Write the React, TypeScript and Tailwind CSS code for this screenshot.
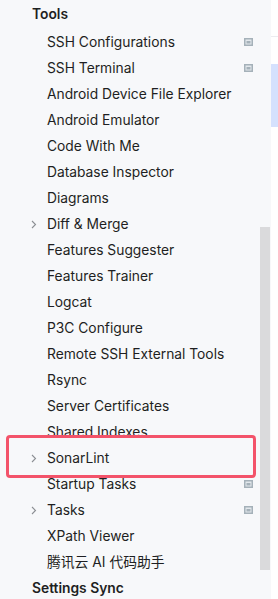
import React from "react";

// Settings tree — "Tools" group of the IDE settings dialog

type Item = { label: string; chevron?: boolean; icon?: boolean };

const items: Item[] = [
  { label: "SSH Configurations", icon: true },
  { label: "SSH Terminal", icon: true },
  { label: "Android Device File Explorer" },
  { label: "Android Emulator" },
  { label: "Code With Me" },
  { label: "Database Inspector" },
  { label: "Diagrams" },
  { label: "Diff & Merge", chevron: true },
  { label: "Features Suggester" },
  { label: "Features Trainer" },
  { label: "Logcat" },
  { label: "P3C Configure" },
  { label: "Remote SSH External Tools" },
  { label: "Rsync" },
  { label: "Server Certificates" },
  { label: "Shared Indexes" },
  { label: "SonarLint", chevron: true },
  { label: "Startup Tasks", icon: true },
  { label: "Tasks", chevron: true, icon: true },
  { label: "XPath Viewer" },
  { label: "腾讯云 AI 代码助手" },
];

function Chevron() {
  return (
    <svg width="6" height="9" viewBox="0 0 6 9" className="ml-[2px]">
      <path d="M1 1 L4.5 4.5 L1 8" fill="none" stroke="#8c8f94" strokeWidth="1.1" />
    </svg>
  );
}

// small "project-level" badge on the right of some rows
function ScopeIcon() {
  return (
    <svg width="9" height="8" viewBox="0 0 9 8">
      <rect x="0.75" y="0.75" width="7.5" height="6.5" fill="#e3e8ec" stroke="#a5b1b9" strokeWidth="1.5" />
      <rect x="2.5" y="3" width="4" height="2.5" fill="#a5b1b9" />
    </svg>
  );
}

function Row({ item }: { item: Item }) {
  return (
    <div className="h-[26px] flex items-center pl-[29px] pr-[18px]">
      <div className="w-[18px] flex items-center">{item.chevron && <Chevron />}</div>
      <span className="flex-1 whitespace-nowrap text-[13.8px] text-[#1e1f22]">{item.label}</span>
      {item.icon && <ScopeIcon />}
    </div>
  );
}

export default function App() {
  return (
    <div
      className="flex w-[278px] h-[599px] overflow-hidden bg-white"
      style={{ fontFamily: 'Inter, "Noto Sans CJK SC", sans-serif' }}
    >
      {/* ── Left: settings tree ── */}
      <div className="relative w-[271px] h-full bg-[#f7f8fa] pt-px">
        <div className="h-[28px] pb-[2px] flex items-center pl-[32px] text-[13.8px] font-semibold text-[#1e1f22]">
          Tools
        </div>
        {items.map((it) => (
          <Row key={it.label} item={it} />
        ))}
        <div className="h-[26px] flex items-center pl-[32px] text-[13.8px] font-semibold text-[#1e1f22]">
          Settings Sync
        </div>

        {/* scrollbar thumb */}
        <div className="absolute left-[260px] top-[227px] w-[10px] h-[343px] bg-[#dadadc]" />

        {/* annotation box around SonarLint */}
        <div className="absolute left-[6px] top-[435px] w-[250px] h-[43px] border-[3px] border-[#f3536a] rounded-[4px]" />
      </div>

      {/* ── Right: content panel edge ── */}
      <div className="flex-1 flex flex-col">
        <div className="h-[37px] border-b border-[#ebecf0]" />
        <div className="h-[27px]" />
        <div className="h-[63px] bg-[#d5e1fd]" />
      </div>
    </div>
  );
}
